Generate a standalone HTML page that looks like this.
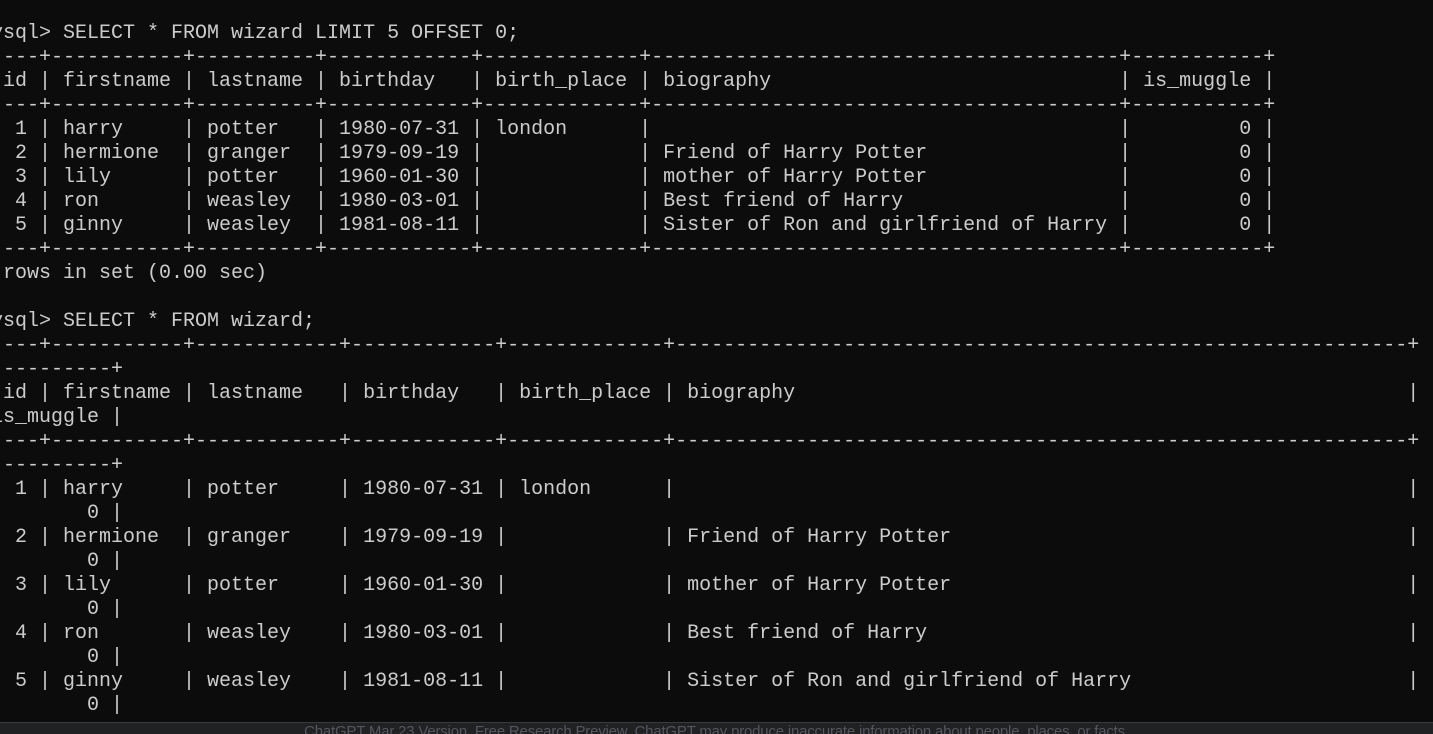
<!DOCTYPE html>
<html><head><meta charset="utf-8"><style>
html,body{margin:0;padding:0;background:#0c0c0c;width:1433px;height:734px;overflow:hidden;position:relative}
.l{position:absolute;left:-21px;height:24px;line-height:24px;white-space:pre;font-family:"Liberation Mono",monospace;font-size:20px;color:#cccccc;margin-top:2px}
.l span{position:absolute;top:0}
.d{left:0;overflow:hidden;white-space:pre}
.p{background:#0c0c0c}
#bar{position:absolute;left:0;top:722px;width:1433px;height:12px;background:#202123;border-top:1px solid #3a3a3c;overflow:hidden}
#bar div{position:absolute;left:0;width:1433px;top:1px;text-align:center;font-family:"Liberation Sans",sans-serif;font-size:15px;line-height:16px;color:#55565e;letter-spacing:-0.2px}
</style></head><body>

<div class="l" style="top:20px">mysql&gt; SELECT * FROM wizard LIMIT 5 OFFSET 0;</div>
<div class="l" style="top:44px"><span class="d" style="width:108ch">----------------------------------------------------------------------------------------------------------------------------------------</span><span class="p" style="left:0">+</span><span class="p" style="left:5ch">+</span><span class="p" style="left:17ch">+</span><span class="p" style="left:28ch">+</span><span class="p" style="left:41ch">+</span><span class="p" style="left:55ch">+</span><span class="p" style="left:95ch">+</span><span class="p" style="left:107ch">+</span></div>
<div class="l" style="top:68px">| id | firstname | lastname | birthday   | birth_place |<span style="left:57ch">biography</span><span style="left:95ch">| is_muggle |</span></div>
<div class="l" style="top:92px"><span class="d" style="width:108ch">----------------------------------------------------------------------------------------------------------------------------------------</span><span class="p" style="left:0">+</span><span class="p" style="left:5ch">+</span><span class="p" style="left:17ch">+</span><span class="p" style="left:28ch">+</span><span class="p" style="left:41ch">+</span><span class="p" style="left:55ch">+</span><span class="p" style="left:95ch">+</span><span class="p" style="left:107ch">+</span></div>
<div class="l" style="top:116px">|  1 | harry     | potter   | 1980-07-31 | london      |<span style="left:95ch">|         0 |</span></div>
<div class="l" style="top:140px">|  2 | hermione  | granger  | 1979-09-19 |             |<span style="left:57ch">Friend of Harry Potter</span><span style="left:95ch">|         0 |</span></div>
<div class="l" style="top:164px">|  3 | lily      | potter   | 1960-01-30 |             |<span style="left:57ch">mother of Harry Potter</span><span style="left:95ch">|         0 |</span></div>
<div class="l" style="top:188px">|  4 | ron       | weasley  | 1980-03-01 |             |<span style="left:57ch">Best friend of Harry</span><span style="left:95ch">|         0 |</span></div>
<div class="l" style="top:212px">|  5 | ginny     | weasley  | 1981-08-11 |             |<span style="left:57ch">Sister of Ron and girlfriend of Harry</span><span style="left:95ch">|         0 |</span></div>
<div class="l" style="top:236px"><span class="d" style="width:108ch">----------------------------------------------------------------------------------------------------------------------------------------</span><span class="p" style="left:0">+</span><span class="p" style="left:5ch">+</span><span class="p" style="left:17ch">+</span><span class="p" style="left:28ch">+</span><span class="p" style="left:41ch">+</span><span class="p" style="left:55ch">+</span><span class="p" style="left:95ch">+</span><span class="p" style="left:107ch">+</span></div>
<div class="l" style="top:260px">5 rows in set (0.00 sec)</div>

<div class="l" style="top:308px">mysql&gt; SELECT * FROM wizard;</div>
<div class="l" style="top:332px"><span class="d" style="width:120ch">----------------------------------------------------------------------------------------------------------------------------------------</span><span class="p" style="left:0">+</span><span class="p" style="left:5ch">+</span><span class="p" style="left:17ch">+</span><span class="p" style="left:30ch">+</span><span class="p" style="left:43ch">+</span><span class="p" style="left:57ch">+</span><span class="p" style="left:119ch">+</span></div>
<div class="l" style="top:356px">-----------+</div>
<div class="l" style="top:380px">| id | firstname | lastname   | birthday   | birth_place |<span style="left:59ch">biography</span><span style="left:119ch">|</span></div>
<div class="l" style="top:404px"> is_muggle |</div>
<div class="l" style="top:428px"><span class="d" style="width:120ch">----------------------------------------------------------------------------------------------------------------------------------------</span><span class="p" style="left:0">+</span><span class="p" style="left:5ch">+</span><span class="p" style="left:17ch">+</span><span class="p" style="left:30ch">+</span><span class="p" style="left:43ch">+</span><span class="p" style="left:57ch">+</span><span class="p" style="left:119ch">+</span></div>
<div class="l" style="top:452px">-----------+</div>
<div class="l" style="top:476px">|  1 | harry     | potter     | 1980-07-31 | london      |<span style="left:119ch">|</span></div>
<div class="l" style="top:500px">         0 |</div>
<div class="l" style="top:524px">|  2 | hermione  | granger    | 1979-09-19 |             |<span style="left:59ch">Friend of Harry Potter</span><span style="left:119ch">|</span></div>
<div class="l" style="top:548px">         0 |</div>
<div class="l" style="top:572px">|  3 | lily      | potter     | 1960-01-30 |             |<span style="left:59ch">mother of Harry Potter</span><span style="left:119ch">|</span></div>
<div class="l" style="top:596px">         0 |</div>
<div class="l" style="top:620px">|  4 | ron       | weasley    | 1980-03-01 |             |<span style="left:59ch">Best friend of Harry</span><span style="left:119ch">|</span></div>
<div class="l" style="top:644px">         0 |</div>
<div class="l" style="top:668px">|  5 | ginny     | weasley    | 1981-08-11 |             |<span style="left:59ch">Sister of Ron and girlfriend of Harry</span><span style="left:119ch">|</span></div>
<div class="l" style="top:692px">         0 |</div>

<div id="bar"><div>ChatGPT Mar 23 Version. Free Research Preview. ChatGPT may produce inaccurate information about people, places, or facts.</div></div>
</body></html>
